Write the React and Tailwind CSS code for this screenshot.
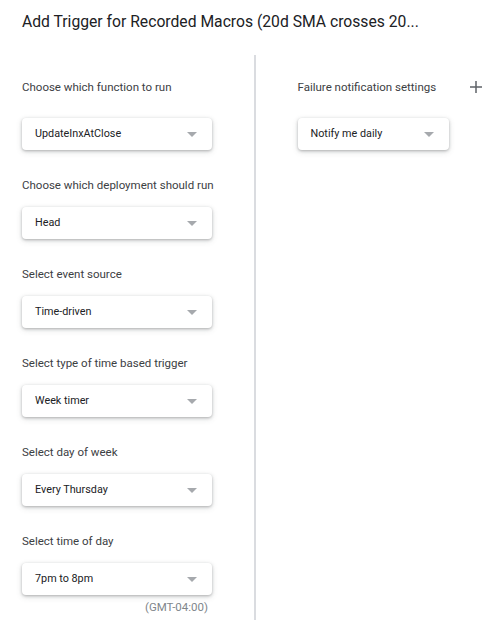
const leftFields = [
    { label: "Choose which deployment should run", value: "Head" },
    { label: "Select event source", value: "Time-driven" },
    { label: "Select type of time based trigger", value: "Week timer" },
    { label: "Select day of week", value: "Every Thursday" },
    { label: "Select time of day", value: "7pm to 8pm" },
];

const Caret = () => (
    <svg width="10" height="5" viewBox="0 0 10 5" className="shrink-0">
        <path d="M0 0 L10 0 L5 5 Z" fill="#a6a9ad" />
    </svg>
);

const Dropdown = ({ value, width = "w-[190px]" }) => (
    <div
        className={`${width} flex h-8 items-center justify-between rounded-[4px] bg-white pl-[13px] pr-[15px] text-[10.8px] text-[#202124] shadow-[0_1px_3px_rgba(60,64,67,0.35),0_2px_6px_rgba(60,64,67,0.15)]`}
    >
        <span>{value}</span>
        <Caret />
    </div>
);

const App = () => {
    return (
        <div className="h-[625px] w-[500px] overflow-hidden bg-white font-['Roboto',sans-serif]">
            <h1 className="px-[22px] pt-[10px] text-[15.7px] leading-6 font-normal text-[#202124]">
                Add Trigger for Recorded Macros (20d SMA crosses 20...
            </h1>

            <div className="mt-[21px] flex h-[565px]">
                {/* left column */}
                <div className="w-[254px] pl-[22px] pt-[24px]">
                    <p className="h-4 text-[11.5px] leading-4 text-[#3c4043]">
                        Choose which function to run
                    </p>
                    <div className="mt-[23px]">
                        <Dropdown value="UpdateInxAtClose" />
                    </div>

                    {leftFields.map((field) => (
                        <div key={field.label} className="mt-[27px]">
                            <p className="h-4 text-[11.5px] leading-4 text-[#3c4043]">
                                {field.label}
                            </p>
                            <div className="mt-[14px]">
                                <Dropdown value={field.value} />
                            </div>
                        </div>
                    ))}

                    <p className="mt-1 w-[186px] text-right text-[11.5px] leading-4 text-[#80868b]">
                        (GMT-04:00)
                    </p>
                </div>

                <div className="w-[1.5px] bg-[#dadce0]" />

                {/* right column */}
                <div className="flex-1 pl-[42px] pr-[18px] pt-[24px]">
                    <div className="flex h-4 items-center justify-between">
                        <p className="text-[11.5px] leading-4 text-[#3c4043]">
                            Failure notification settings
                        </p>
                        <svg width="12" height="12" viewBox="0 0 12 12">
                            <path d="M6 0 V12 M0 6 H12" stroke="#5f6368" strokeWidth="1.5" />
                        </svg>
                    </div>
                    <div className="mt-[23px]">
                        <Dropdown value="Notify me daily" width="w-[151px]" />
                    </div>
                </div>
            </div>
        </div>
    );
};

export default App;
